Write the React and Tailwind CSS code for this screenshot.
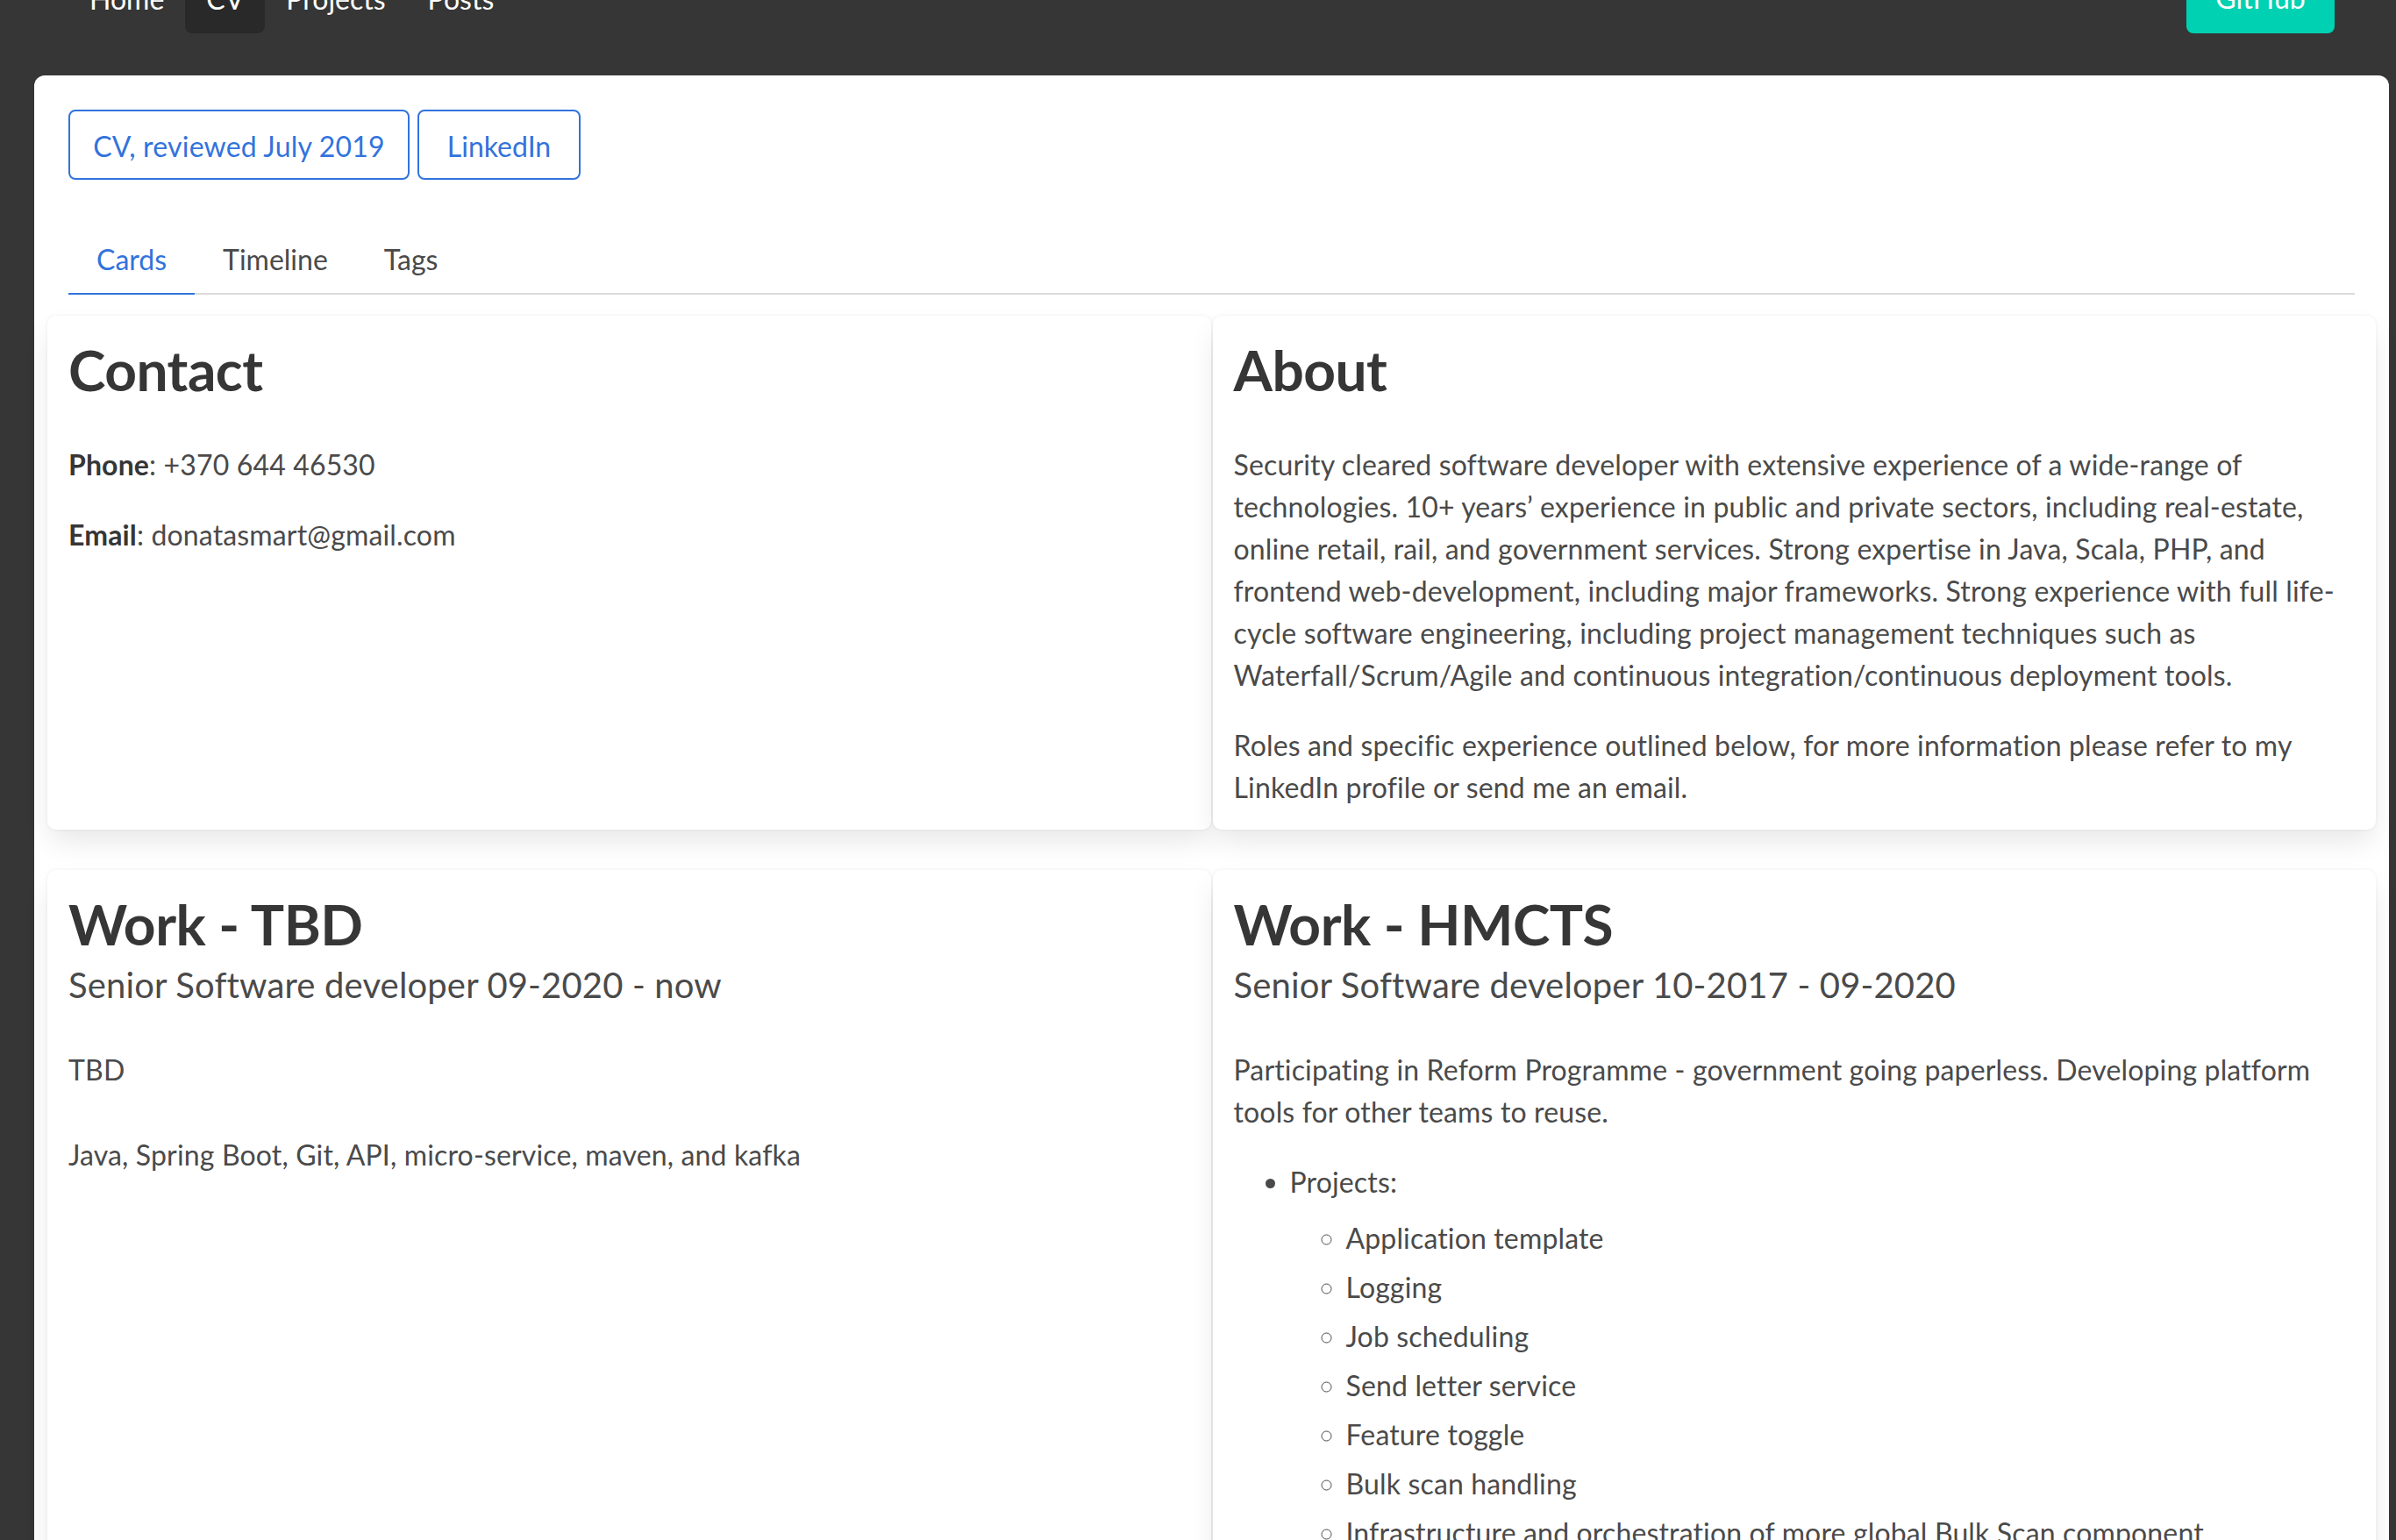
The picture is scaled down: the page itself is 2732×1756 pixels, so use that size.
import React from "react";

function NavItem({ children, active }) {
  return (
    <a
      className={
        "flex h-full items-end px-[24px] pb-[15px] text-[32px] leading-[48px] text-white rounded-[8px] " +
        (active ? "bg-[#292929]" : "")
      }
    >
      {children}
    </a>
  );
}

function Card({ children }) {
  return (
    <div className="bg-white rounded-[10px] px-[24px] pt-[26px] pb-[24px] shadow-[0_16px_32px_-4px_rgba(10,10,10,0.1),0_0_0_2px_rgba(10,10,10,0.02)]">
      {children}
    </div>
  );
}

function Title({ children, sub }) {
  return (
    <h2
      className={
        "text-[64px] leading-[72px] font-bold tracking-[-0.5px] text-[#363636] " +
        (sub ? "mb-[8px]" : "mb-[48px]")
      }
    >
      {children}
    </h2>
  );
}

function Subtitle({ children }) {
  return (
    <p className="text-[40px] leading-[50px] text-[#4a4a4a] mb-[48px]">{children}</p>
  );
}

export default function App() {
  const projects = [
    "Application template",
    "Logging",
    "Job scheduling",
    "Send letter service",
    "Feature toggle",
    "Bulk scan handling",
    "Infrastructure and orchestration of more global Bulk Scan component",
  ];
  return (
    <div className="h-screen overflow-hidden bg-[#363636] font-[Lato,sans-serif]">
      <nav className="-mt-[66px] h-[104px] flex items-end justify-between pl-[78px] pr-[70px]">
        <div className="flex h-full items-stretch">
          <NavItem>Home</NavItem>
          <NavItem active>CV</NavItem>
          <NavItem>Projects</NavItem>
          <NavItem>Posts</NavItem>
        </div>
        <a className="flex h-[80px] w-[169px] items-center justify-center rounded-[8px] bg-[#00d1b2] text-[32px] leading-[48px] text-white">
          GitHub
        </a>
      </nav>

      <main className="mt-[48px] ml-[39px] mr-[8px] bg-white rounded-t-[12px] pl-[39px] pr-[39px] pt-[39px] h-[1700px]">
        <div className="flex gap-[9px]">
          <a className="flex h-[80px] w-[389px] items-center justify-center rounded-[8px] border-2 border-[#3273dc] pt-[3px] text-[32px] leading-[48px] tracking-[0.2px] text-[#3273dc]">
            CV, reviewed July 2019
          </a>
          <a className="flex h-[80px] w-[186px] items-center justify-center rounded-[8px] border-2 border-[#3273dc] pt-[3px] text-[32px] leading-[48px] text-[#3273dc]">
            LinkedIn
          </a>
        </div>

        <div className="mt-[51px] flex border-b-2 border-[#dbdbdb]">
          <a className="-mb-[2px] border-b-2 border-[#3273dc] px-[32px] pt-[16px] pb-[14px] text-[32px] leading-[48px] text-[#3273dc]">
            Cards
          </a>
          <a className="-mb-[2px] border-b-2 border-transparent px-[32px] pt-[16px] pb-[14px] text-[32px] leading-[48px] text-[#4a4a4a]">
            Timeline
          </a>
          <a className="-mb-[2px] border-b-2 border-transparent px-[32px] pt-[16px] pb-[14px] text-[32px] leading-[48px] text-[#4a4a4a]">
            Tags
          </a>
        </div>

        <div className="-mx-[24px] mt-[24px] grid grid-cols-2 gap-x-[2px] gap-y-[46px] text-[32px] leading-[48px] tracking-[0.15px] text-[#4a4a4a]">
          <Card>
            <Title>Contact</Title>
            <p className="mb-[32px]">
              <strong className="font-bold text-[#363636]">Phone</strong>: +370 644 46530
            </p>
            <p>
              <strong className="font-bold text-[#363636]">Email</strong>: donatasmart@gmail.com
            </p>
          </Card>
          <Card>
            <Title>About</Title>
            <p className="mb-[32px] whitespace-nowrap">
              Security cleared software developer with extensive experience of a wide-range of
              <br />
              technologies. 10+ years’ experience in public and private sectors, including real-estate,
              <br />
              online retail, rail, and government services. Strong expertise in Java, Scala, PHP, and
              <br />
              frontend web-development, including major frameworks. Strong experience with full life-
              <br />
              cycle software engineering, including project management techniques such as
              <br />
              Waterfall/Scrum/Agile and continuous integration/continuous deployment tools.
            </p>
            <p className="whitespace-nowrap">
              Roles and specific experience outlined below, for more information please refer to my
              <br />
              LinkedIn profile or send me an email.
            </p>
          </Card>
          <Card>
            <Title sub>Work - TBD</Title>
            <Subtitle>Senior Software developer 09-2020 - now</Subtitle>
            <p className="mb-[49px]">TBD</p>
            <p>Java, Spring Boot, Git, API, micro-service, maven, and kafka</p>
          </Card>
          <Card>
            <Title sub>Work - HMCTS</Title>
            <Subtitle>Senior Software developer 10-2017 - 09-2020</Subtitle>
            <p className="whitespace-nowrap">
              Participating in Reform Programme - government going paperless. Developing platform
              <br />
              tools for other teams to reuse.
            </p>
            <ul className="mt-[32px] ml-[64px] list-disc">
              <li>
                Projects:
                <ul className="mt-[16px] ml-[64px] list-[circle]">
                  {projects.map((p, i) => (
                    <li key={p} className={i > 0 ? "mt-[8px]" : ""}>
                      {p}
                    </li>
                  ))}
                </ul>
              </li>
            </ul>
          </Card>
        </div>
      </main>
    </div>
  );
}
